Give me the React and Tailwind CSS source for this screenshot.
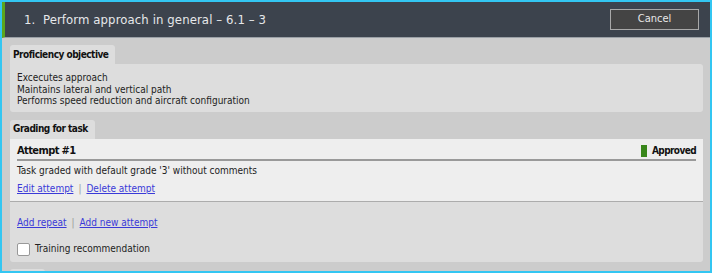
import React from 'react';

const font = { fontFamily: '"DejaVu Sans Condensed", "DejaVu Sans", sans-serif' };

const Tab = ({ children }) => (
  <div className="self-start h-[19px] pl-[3px] pr-[7px] flex items-center bg-[#dddddd] rounded-t-[3px] text-[10px] leading-[12px] font-bold tracking-[-0.5px] text-[#111]">
    {children}
  </div>
);

const Links = ({ items }) => (
  <div className="flex items-center gap-[5px] text-[10px] leading-[12px]">
    {items.map((label, i) => (
      <React.Fragment key={label}>
        {i > 0 && <span className="text-[#999]">|</span>}
        <a href="#" className="text-[#3a3ad8] underline">{label}</a>
      </React.Fragment>
    ))}
  </div>
);

export default function App() {
  return (
    <div
      className="w-[712px] h-[273px] border-2 border-[#33c6f2] bg-[#cccccc] overflow-hidden flex flex-col text-[#222] font-stretch-condensed"
      style={font}
    >
      {/* Header */}
      <div className="h-[36px] shrink-0 flex items-center justify-between bg-[#3c434d] border-l-[3px] border-l-[#5ba61c] border-b border-b-[#9aa0a6] pl-[19px] pr-[11px]">
        <h1 className="text-[13px] text-[#e6e8ea] tracking-[0.1px]">
          1.&nbsp;&nbsp;Perform approach in general – 6.1 – 3
        </h1>
        <button className="w-[89px] h-[21px] bg-[#444444] border border-[#a8a8a8] text-[#e8e8e8] text-[11px]">
          Cancel
        </button>
      </div>

      {/* Body */}
      <div className="flex flex-col pl-[8px] pr-[7px] pt-[7px]">
        <Tab>Proficiency objective</Tab>
        <div className="bg-[#dddddd] rounded-b-[3px] rounded-tr-[3px] pl-[7px] pt-[8px] pb-[5px] text-[10px] leading-[11.5px]">
          <p>Excecutes approach</p>
          <p>Maintains lateral and vertical path</p>
          <p>Performs speed reduction and aircraft configuration</p>
        </div>

        <div className="h-[8px] shrink-0" />

        <Tab>Grading for task</Tab>
        <div className="bg-[#dddddd] rounded-b-[3px] rounded-tr-[3px] flex flex-col">
          <div className="bg-[#eeeeee] border-b border-[#acacac] px-[7px] pt-[5px] pb-[6px]">
            <div className="h-[17px] flex items-center justify-between border-b-2 border-[#999999]">
              <span className="text-[11px] leading-[14px] font-bold tracking-[-0.6px] text-[#111]">Attempt #1</span>
              <span className="flex items-center gap-[5px] text-[10px] leading-[12px] font-bold tracking-[-0.6px] text-[#111]">
                <span className="w-[6px] h-[12px] bg-[#38861a]" />
                Approved
              </span>
            </div>
            <p className="text-[10px] leading-[12px] mt-[4px]">Task graded with default grade '3' without comments</p>
            <div className="mt-[6px]">
              <Links items={['Edit attempt', 'Delete attempt']} />
            </div>
          </div>

          <div className="px-[7px] pt-[15px] pb-[6px] flex flex-col">
            <Links items={['Add repeat', 'Add new attempt']} />
            <label className="mt-[14px] flex items-center gap-[5px] text-[10px] leading-[12px]">
              <span className="w-[13px] h-[13px] bg-white border border-[#999] rounded-[2px]" />
              Training recommendation
            </label>
          </div>
        </div>

        <div className="h-[7px] shrink-0" />
        <div className="w-[35px] h-[19px] bg-[#dddddd] rounded-t-[3px]" />
      </div>
    </div>
  );
}
